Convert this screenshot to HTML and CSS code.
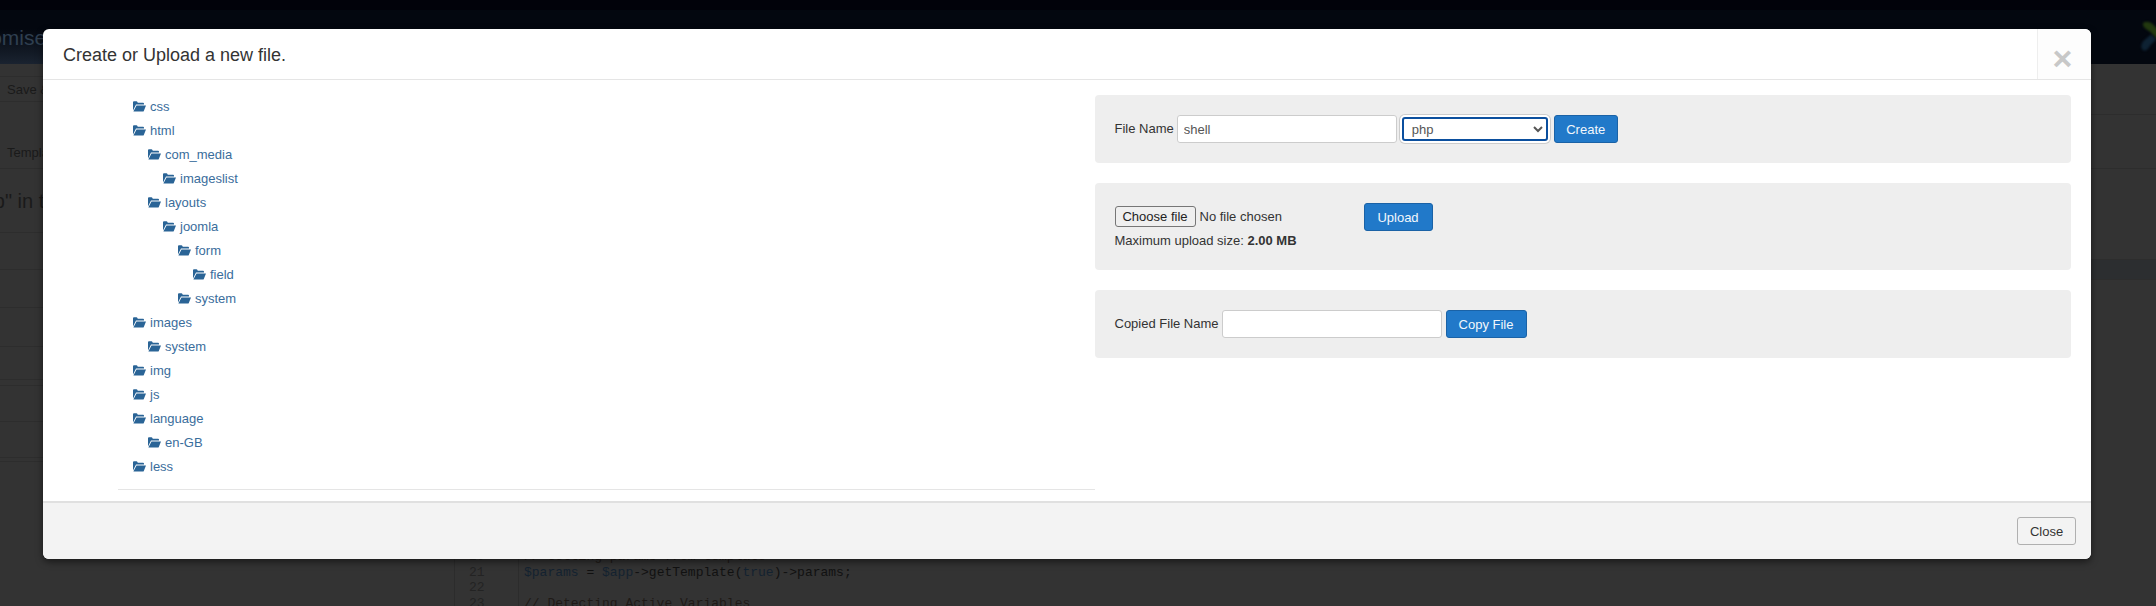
FILE: index.html
```html
<!DOCTYPE html>
<html lang="en">
<head>
<meta charset="utf-8">
<title>Create or Upload a new file</title>
<link rel="stylesheet" href="styles.css">
</head>
<body>
<svg class="sprite" width="0" height="0" aria-hidden="true">
  <symbol id="folder" viewBox="0 0 13 11">
    <path d="M0 1.2C0 .7.4.3.9.3h2.6c.4 0 .7.2.9.6l.4.8h5.3c.5 0 .9.4.9.9v1H3L0 9.6z"/>
    <path d="M3.5 4.6H13l-2.2 5.3c-.1.4-.5.7-.9.7H.4z"/>
  </symbol>
</svg>
<div class="page">
  <header class="topbar">
    <div class="topstrip"></div>
    <div class="brand">
      <span class="brand-title">Customise</span>
      <svg class="brand-logo" viewBox="0 0 40 40" aria-hidden="true">
        <path class="logo-green" d="M4 3c6-3 11 1 14 5l8 8-6 6-9-9C7 10 2 8 4 3z"/>
        <path class="logo-orange" d="M22 12l8-4 6 6-8 6z"/>
        <path class="logo-blue" d="M4 36c-5-4-2-10 2-13l7-6 6 6-7 7c-2 3-4 7-8 6z"/>
      </svg>
    </div>
  </header>
  <div class="backdrop">
    <div class="side side-left">
      <div></div>
      <div class="side-text">Save &amp; Close</div>
      <div class="side-text side-text-low">Templates</div>
      <div class="side-heading">.php" in template</div>
      <div></div><div></div><div></div><div></div><div></div><div></div><div></div><div></div>
    </div>
    <div class="code">
      <div class="code-line"><span class="num">20</span><span class="src com">// Getting params from template</span></div>
      <div class="code-line"><span class="num">21</span><span class="src"><span class="var">$params</span> = <span class="var">$app</span>-&gt;getTemplate(<span class="var">true</span>)-&gt;params;</span></div>
      <div class="code-line"><span class="num">22</span><span class="src"></span></div>
      <div class="code-line"><span class="num">23</span><span class="src com">// Detecting Active Variables</span></div>
    </div>
    <div class="side side-right">
      <div></div>
      <div></div>
      <div></div>
      <div class="band"></div>
    </div>
  </div>
</div>

<section class="modal" role="dialog">
  <header class="modal-head">
    <h3 class="modal-title">Create or Upload a new file.</h3>
    <button class="modal-x" type="button">×</button>
  </header>
  <div class="modal-body">
    <div class="tree-col">
      <ul class="tree">
        <li><a><svg class="fi"><use href="#folder"/></svg>css</a></li>
        <li><a><svg class="fi"><use href="#folder"/></svg>html</a>
          <ul>
            <li><a><svg class="fi"><use href="#folder"/></svg>com_media</a>
              <ul><li><a><svg class="fi"><use href="#folder"/></svg>imageslist</a></li></ul>
            </li>
            <li><a><svg class="fi"><use href="#folder"/></svg>layouts</a>
              <ul>
                <li><a><svg class="fi"><use href="#folder"/></svg>joomla</a>
                  <ul>
                    <li><a><svg class="fi"><use href="#folder"/></svg>form</a>
                      <ul><li><a><svg class="fi"><use href="#folder"/></svg>field</a></li></ul>
                    </li>
                    <li><a><svg class="fi"><use href="#folder"/></svg>system</a></li>
                  </ul>
                </li>
              </ul>
            </li>
          </ul>
        </li>
        <li><a><svg class="fi"><use href="#folder"/></svg>images</a>
          <ul><li><a><svg class="fi"><use href="#folder"/></svg>system</a></li></ul>
        </li>
        <li><a><svg class="fi"><use href="#folder"/></svg>img</a></li>
        <li><a><svg class="fi"><use href="#folder"/></svg>js</a></li>
        <li><a><svg class="fi"><use href="#folder"/></svg>language</a>
          <ul><li><a><svg class="fi"><use href="#folder"/></svg>en-GB</a></li></ul>
        </li>
        <li><a><svg class="fi"><use href="#folder"/></svg>less</a></li>
      </ul>
      <hr class="tree-rule">
    </div>
    <div class="forms-col">
      <form class="well">
        <label class="lbl">File Name</label>
        <input class="txt" type="text" value="shell">
        <select class="sel"><option>php</option></select>
        <button class="btn btn-create" type="button">Create</button>
      </form>
      <form class="well well-upload">
        <div class="upload-line">
          <div class="file">
            <button class="file-btn" type="button">Choose file</button>
            <span class="file-name">No file chosen</span>
          </div>
          <button class="btn btn-upload" type="button">Upload</button>
        </div>
        <p class="upload-note">Maximum upload size: <strong>2.00 MB</strong></p>
      </form>
      <form class="well">
        <label class="lbl">Copied File Name</label>
        <input class="txt" type="text">
        <button class="btn btn-copy" type="button">Copy File</button>
      </form>
    </div>
  </div>
  <footer class="modal-foot">
    <button class="btn-close" type="button">Close</button>
  </footer>
</section>
</body>
</html>
```
FILE: styles.css
```css
* { box-sizing: border-box; }
html, body { height: 100%; margin: 0; overflow: hidden; }
body { background: #333; font: 13px/18px "Liberation Sans", Arial, sans-serif; color: #333; }
.sprite { position: absolute; }

.page { height: 606px; display: flex; flex-direction: column; overflow: hidden; }
.topbar { height: 64px; flex: none; background: #03070f; display: flex; flex-direction: column; overflow: hidden; }
.topstrip { height: 10px; flex: none; background: #01020a; }
.brand { flex: 1; display: flex; justify-content: space-between; align-items: flex-start; background: linear-gradient(transparent 35%, #1a2330) 0 0 / 43px 100% no-repeat; }
.brand-title { font-size: 21px; line-height: 36px; margin: 10px 0 0 -53px; color: #2f3f50; }
.brand-logo { width: 34px; height: 34px; margin: 10px -18px 0 0; flex: none; filter: blur(1px); }
.logo-green { fill: #22380f; }
.logo-orange { fill: #40260f; }
.logo-blue { fill: #0e2233; }

.backdrop { flex: 1; display: flex; min-height: 0; }
.side-left { width: 454px; flex: none; display: grid; grid-template-rows: 13px 25px 67px 64px 37px 38px 39px 33px 6px 36px 36px 4px; }
.side-left > div { border-bottom: 1px solid #2d2d2d; }
.side-text { padding: 1px 0 0 7px; color: #1a1a1a; line-height: 24px; white-space: nowrap; }
.side-text-low { line-height: 32px; padding-top: 35px; }
.side-heading { font-size: 20px; line-height: 64px; margin-left: -34px; color: #1a1a1a; white-space: nowrap; }
.code { flex: 1; display: flex; flex-direction: column; justify-content: flex-end; font: 13px/15.4px "Liberation Mono", monospace; color: #111; margin-bottom: -5px; }
.code-line { display: flex; }
.num { width: 65px; flex: none; padding-left: 14px; color: #232323; border-left: 1px solid #2c2c2c; border-right: 1px solid #2c2c2c; }
.src { padding-left: 5px; white-space: pre; }
.var { color: #132230; }
.com { color: #1f1a17; }
.side-right { width: 200px; flex: none; display: grid; grid-template-rows: 51px 54px 91px 20px; }
.side-right > div { border-bottom: 1px solid #2d2d2d; }
.band { background: #2c2e30; }

.modal { position: absolute; left: 43px; top: 29px; width: 2048px; height: 530px; display: flex; flex-direction: column; background: #fff; border-radius: 6px; box-shadow: 0 3px 7px rgba(0, 0, 0, .5); overflow: hidden; }
.modal-head { height: 51px; flex: none; display: flex; align-items: stretch; justify-content: space-between; border-bottom: 1px solid #e5e5e5; }
.modal-title { margin: 0; padding: 1px 0 0 20px; font-size: 18px; font-weight: 400; line-height: 50px; color: #333; }
.modal-x { width: 54px; border: 0; border-left: 1px solid #eee; background: #fdfdfd; color: #c8c8c8; font: 700 34px/1 "Liberation Sans", Arial, sans-serif; padding: 7px 4px 0 0; }

.modal-body { flex: 1; display: grid; grid-template-columns: 1fr 1fr; padding: 15px 20px 0 75px; min-height: 0; }
.tree, .tree ul { list-style: none; margin: 0; }
.tree { padding: 0 0 0 15px; }
.tree ul { padding: 0 0 0 15px; }
.tree a { display: flex; align-items: center; height: 24px; color: #3a6d9c; }
.fi { width: 13px; height: 11px; margin-right: 4px; fill: #2a6496; flex: none; position: relative; top: -1px; }
.tree-rule { border: 0; border-top: 1px solid #e5e5e5; margin: 10px 0 0; }

.well { display: flex; align-items: center; gap: 3px; height: 68px; margin: 0 0 20px; padding: 0 20px; background: #eee; border-radius: 4px; }
.well-upload { height: 87px; flex-direction: column; align-items: flex-start; justify-content: flex-start; padding-top: 20px; gap: 0; }
.lbl { line-height: 28px; }
.txt { width: 220px; height: 28px; margin-right: 1px; padding: 0 6px; border: 1px solid #ccc; border-radius: 3px; background: #fff; color: #555; font: 13px "Liberation Sans", Arial, sans-serif; }
.sel { width: 146px; height: 24px; margin: 0 3px 0 1px; padding: 0 4px; border: 2px solid #0b4f9e; border-radius: 3px; box-shadow: 0 0 0 2px #fff, 0 0 0 3px #ccc; background-color: #fff; color: #555; font: 13px "Liberation Sans", Arial, sans-serif; }
.btn { height: 28px; padding: 0; border: 1px solid #1a62a6; border-radius: 3px; background: #2179c9; color: #f2f7fc; font: 13px "Liberation Sans", Arial, sans-serif; }
.btn-create { width: 64px; }
.btn-upload { width: 69px; }
.btn-copy { width: 81px; }
.upload-line { display: flex; align-items: flex-start; height: 28px; }
.file { width: 249px; height: 21px; margin-top: 3px; display: flex; align-items: center; gap: 4px; }
.file-btn { width: 81px; height: 21px; padding: 0; border: 1px solid #767676; border-radius: 3px; background: #efefef; color: #222; font: 13px "Liberation Sans", Arial, sans-serif; }
.file-name { color: #333; }
.upload-note { margin: 0; line-height: 18px; padding-top: 1px; }

.modal-foot { height: 58px; flex: none; display: flex; justify-content: flex-end; align-items: center; padding: 0 15px; background: #f3f3f3; border-top: 2px solid #e0e0e0; }
.btn-close { width: 59px; height: 28px; padding: 0; border: 1px solid #b0b0b0; border-radius: 3px; background: #f3f3f3; color: #333; font: 13px "Liberation Sans", Arial, sans-serif; }
```
